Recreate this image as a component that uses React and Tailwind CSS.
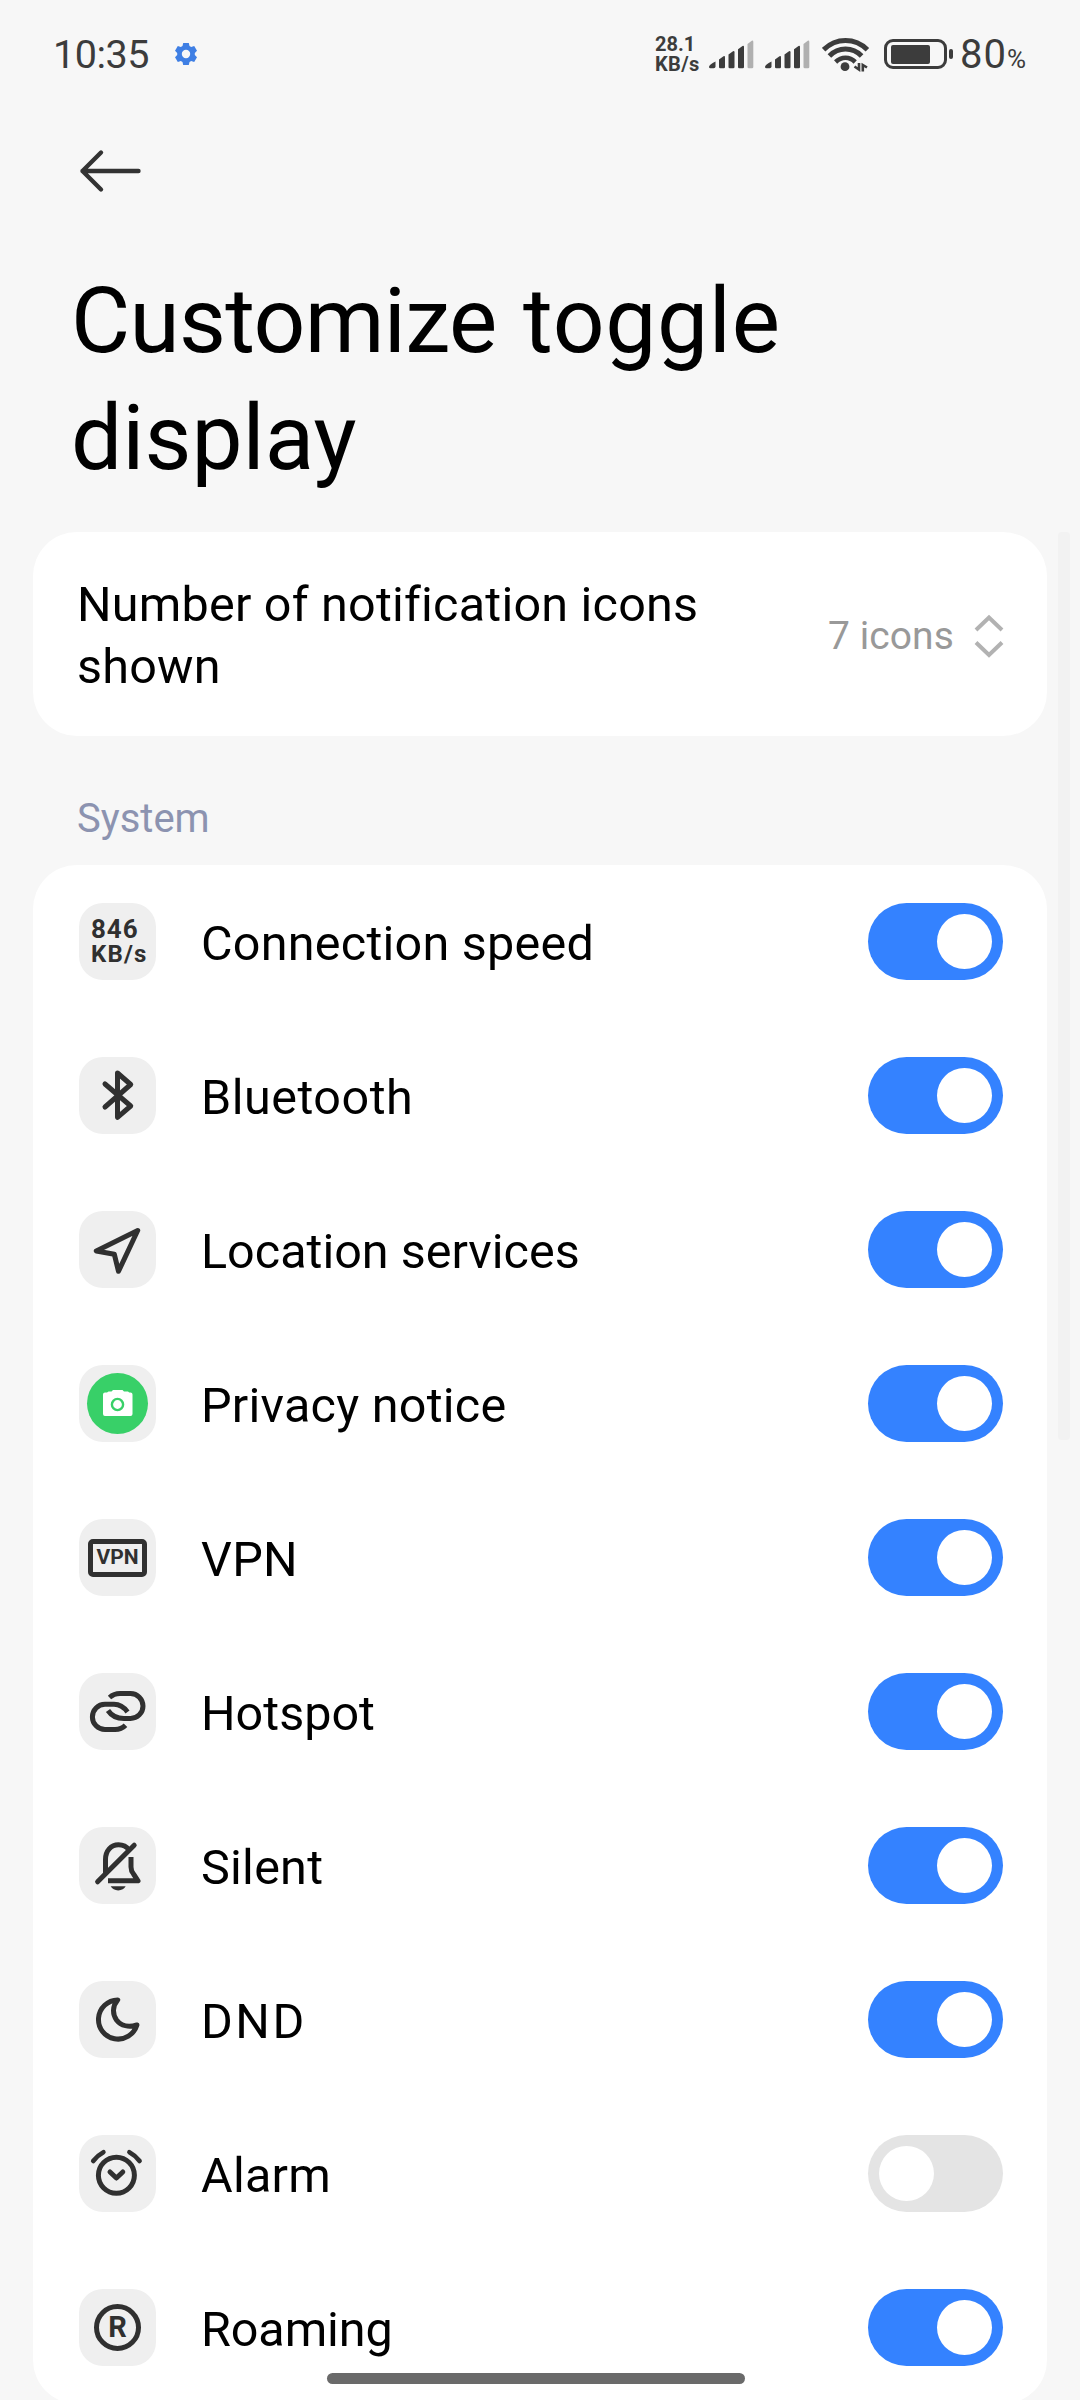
import { useState } from 'react';

function Stroke({ children, width = 5, cap = 'round' }) {
    return (
        <svg viewBox="0 0 77 77" className="w-[77px] h-[77px]" fill="none" stroke="#303030" strokeWidth={width} strokeLinecap={cap} strokeLinejoin="round">
            {children}
        </svg>
    );
}

function SpeedIcon() {
    return (
        <div className="w-full pl-3 text-[#303030] font-bold">
            <div className="text-[26px] leading-[25px] tracking-[0.9px]">846</div>
            <div className="text-[24px] leading-[25px] tracking-[1.2px]">KB/s</div>
        </div>
    );
}

function BluetoothIcon() {
    return (
        <Stroke>
            <path d="M26 27 L51.7 49 L38.5 60.3 V16 L51.7 27.5 L26 50" />
        </Stroke>
    );
}

function LocationIcon() {
    return (
        <Stroke>
            <path d="M58.7 19.5 L17.3 40 L35.3 43.2 L39.5 60.3 Z" />
        </Stroke>
    );
}

function CameraIcon() {
    return (
        <svg viewBox="0 0 77 77" className="w-[77px] h-[77px]">
            <circle cx="38.5" cy="38.5" r="30.5" fill="#38d068" />
            <path d="M26 27.5 h2 l1.5 -1 h3 l1.5 -1.5 h9.5 l1.5 1.5 h4 l1.2 1 h1.3 a2 2 0 0 1 2 2 v19.5 a2 2 0 0 1 -2 2 h-25.5 a2 2 0 0 1 -2 -2 v-19.5 a2 2 0 0 1 2 -2 z" fill="#fff" />
            <circle cx="38.5" cy="39.5" r="5.6" fill="none" stroke="#38d068" strokeWidth="2.4" />
        </svg>
    );
}

function VpnIcon() {
    return (
        <div className="w-[59px] h-[38px] border-[5px] border-[#303030] rounded-[5px] flex items-center justify-center text-[#303030] text-[21px] leading-none font-bold">
            VPN
        </div>
    );
}

function HotspotIcon() {
    return (
        <Stroke cap="butt">
            <path d="M30.5 24.5 Q35 20.5 41 20.5 H51.5 A12.5 12.5 0 0 1 51.5 45.5 H45 C37.5 45.5 33 43.5 29 37.5" />
            <path d="M48.5 39 C44.5 33.5 40.5 31.3 35 31.3 H26 A12.6 12.6 0 0 0 26 56.5 H36 Q42.5 56.5 46.5 52.3" />
        </Stroke>
    );
}

function SilentIcon() {
    return (
        <Stroke>
            <path d="M18.6 54.8 L55.2 18.2" />
            <path strokeLinecap="butt" d="M26.5 46 V32.5 C26.5 24 32 17.8 39.5 17.8 C44 17.8 47.5 19.5 50 23" />
            <path strokeLinecap="butt" d="M52 30 V40 Q52 44 54.5 47 L59 53.8 H29" />
            <path d="M31.7 59.3 H46.7 Q44.5 63.4 39.2 63.4 Q34 63.4 31.7 59.3 Z" fill="#303030" stroke="none" />
        </Stroke>
    );
}

function MoonIcon() {
    return (
        <Stroke>
            <path d="M38.7 18.9 A19.6 19.6 0 1 0 57.9 44 C50 46.5 42 45 37.5 39 C33.2 32.8 33.5 25 38.7 18.9 Z" />
        </Stroke>
    );
}

function AlarmIcon() {
    return (
        <Stroke>
            <circle cx="37.4" cy="40.3" r="18" />
            <path d="M31 37 L37.4 43 L43.8 37" />
            <path strokeWidth="4.6" d="M14.2 26 Q18.4 20.4 24.4 17.2 M50.4 17.2 Q56.4 20.4 60.6 26" />
        </Stroke>
    );
}

function RoamingIcon() {
    return (
        <div className="w-[47px] h-[47px] border-[5px] border-[#303030] rounded-full flex items-center justify-center text-[#303030] text-[29px] leading-none font-bold">
            R
        </div>
    );
}

const ITEMS = [
    { label: 'Connection speed', icon: SpeedIcon, on: true },
    { label: 'Bluetooth', icon: BluetoothIcon, on: true, tracking: 'tracking-[0.5px]' },
    { label: 'Location services', icon: LocationIcon, on: true, tracking: 'tracking-normal' },
    { label: 'Privacy notice', icon: CameraIcon, on: true },
    { label: 'VPN', icon: VpnIcon, on: true },
    { label: 'Hotspot', icon: HotspotIcon, on: true, tracking: 'tracking-normal' },
    { label: 'Silent', icon: SilentIcon, on: true },
    { label: 'DND', icon: MoonIcon, on: true, tracking: 'tracking-[2.5px]' },
    { label: 'Alarm', icon: AlarmIcon, on: false },
    { label: 'Roaming', icon: RoamingIcon, on: true, tracking: 'tracking-[-0.1px]' },
];

function Toggle({ on, onClick }) {
    return (
        <button onClick={onClick} className={`w-[135px] h-[77px] rounded-full p-[11px] flex shrink-0 ${on ? 'bg-[#3482ff] justify-end' : 'bg-[#e4e4e4] justify-start'}`}>
            <span className="w-[55px] h-[55px] rounded-full bg-white" />
        </button>
    );
}

function Signal() {
    return (
        <svg viewBox="0 0 45 29" className="w-[45px] h-[29px]" fill="#3c3c3c">
            <path d="M0 27 q0 -2.5 6.5 -5.5 V26.5 q0 1.8 -1.8 1.8 H1.5 q-1.5 0 -1.5 -1.3 z" />
            <path d="M10 19.5 l4.5 -3.3 q1.5 -.6 1.5 1 V27 q0 1.3 -1.3 1.3 H11.3 q-1.3 0 -1.3 -1.3 z" />
            <path d="M19.5 14.5 l4.5 -3.3 q1.5 -.6 1.5 1 V27 q0 1.3 -1.3 1.3 H20.8 q-1.3 0 -1.3 -1.3 z" />
            <path d="M29 9.3 l4.5 -3.3 q1.5 -.6 1.5 1 V27 q0 1.3 -1.3 1.3 H30.3 q-1.3 0 -1.3 -1.3 z" />
            <path fill="#b0b0b0" d="M38.5 4 l4.3 -3.3 q1.5 -.6 1.5 1 V27 q0 1.3 -1.3 1.3 H39.8 q-1.3 0 -1.3 -1.3 z" />
        </svg>
    );
}

function StatusBar() {
    return (
        <div className="h-[108px] pl-[53px] pr-[54px] flex items-center text-[#3c3c3c]">
            <span className="text-[39.5px] leading-none tracking-[-0.5px] w-[121px] pt-[2px]">10:35</span>
            <svg viewBox="0 0 24 24" className="w-6 h-6 mr-auto">
                <path fill="#3f7fe4" fillRule="evenodd" d="M9.2 1 H14.8 L15.5 4 L17.2 4.9 L20.2 4 L23 8.8 L20.8 11 V13 L23 15.2 L20.2 20 L17.2 19.1 L15.5 20 L14.8 23 H9.2 L8.5 20 L6.8 19.1 L3.8 20 L1 15.2 L3.2 13 V11 L1 8.8 L3.8 4 L6.8 4.9 L8.5 4 Z M12 7.8 A4.2 4.2 0 1 0 12 16.2 A4.2 4.2 0 1 0 12 7.8 Z" />
            </svg>
            <div className="font-bold text-[20px] leading-[20px] w-[54px]">
                <div>28.1</div>
                <div className="tracking-[0.4px]">KB/s</div>
            </div>
            <Signal />
            <div className="w-[11px]" />
            <Signal />
            <svg viewBox="0 0 48 36" className="w-12 h-9 ml-3" fill="none" stroke="#3c3c3c" strokeWidth="5">
                <path d="M1.6 13.7 Q11 4.5 23.5 4.5 Q36 4.5 45.4 13.7" />
                <path d="M7.4 20 Q14.2 13.1 23.5 13.1 Q32.8 13.1 39.6 20" />
                <path strokeWidth="4.6" d="M13.6 26 Q18 21.8 23.5 21.8 Q29 21.8 33.2 26" />
                <circle cx="23" cy="30.7" r="4.4" fill="#3c3c3c" stroke="none" />
                <path strokeWidth="2.6" d="M37 27 V33.5 L32.5 30.5 M40.8 35.5 V29 L45 31.5" />
            </svg>
            <div className="ml-[14px] w-[63px] h-[30px] border-[3px] border-[#3c3c3c] rounded-[9px] flex items-center pl-1">
                <div className="w-[39px] h-[19px] bg-[#3c3c3c] rounded-[2px]" />
            </div>
            <div className="w-1 h-[10px] bg-[#3c3c3c] rounded-[2px] ml-[2px]" />
            <div className="ml-[7px] pt-[2px] flex items-baseline">
                <span className="text-[40px] leading-none tracking-[1px]">80</span>
                <span className="text-[26px] leading-none">%</span>
            </div>
        </div>
    );
}

export default function App() {
    const [items, setItems] = useState(ITEMS);

    const flip = (label) => {
        setItems(items.map(i => (i.label === label ? { ...i, on: !i.on } : i)));
    };

    return (
        <div className="relative w-[1080px] h-[2400px] overflow-hidden bg-[#f7f7f7] text-black font-[Roboto,sans-serif] [font-variant-ligatures:none]">
            <StatusBar />

            <div className="h-[152px] pl-[78px] pt-[41px]">
                <svg viewBox="0 0 64 44" className="w-16 h-11" fill="none" stroke="#333" strokeWidth="4.4" strokeLinecap="round" strokeLinejoin="round">
                    <path d="M60.5 22 H4.5 M23 3.5 L4.5 22 L23 40.5" />
                </svg>
            </div>

            <h1 className="pl-[71px] pt-[3px] text-[91px] leading-[117px] h-[272px]">
                <span className="tracking-[-0.7px]">Customize</span> <span className="pl-[4px] tracking-[0.7px]">toggle</span><br />display
            </h1>

            <div className="mx-[33px] h-[204px] pl-[44px] pr-[43px] pt-[3px] bg-white rounded-[44px] flex items-center">
                <div className="text-[48.5px] leading-[62px] tracking-[0.22px] pt-[1px] flex-1">Number of notification icons<br />shown</div>
                <div className="text-[39px] text-[#999] pt-[1px] tracking-[0.1px]">7 icons</div>
                <svg viewBox="0 0 30 44" className="w-[30px] h-11 ml-5" fill="none" stroke="#b2b2b2" strokeWidth="4">
                    <path d="M2 16 L15 3.5 L28 16 M2 28.5 L15 41 L28 28.5" />
                </svg>
            </div>

            <div className="h-[129px] pl-[77px] pt-[53px] text-[40px] leading-[60px] text-[#8c93b0]">System</div>

            <div className="mx-[33px] h-[1539px] pt-[38px] px-11 bg-white rounded-[44px] flex flex-col gap-[77px]">
                {items.map(({ label, icon: Icon, on, tracking }) => (
                    <div key={label} className="h-[77px] pl-[2px] flex items-center shrink-0">
                        <div className="w-[77px] h-[77px] rounded-[24px] bg-[#efefef] flex items-center justify-center">
                            <Icon />
                        </div>
                        <span className={`flex-1 pl-[45px] pt-[5px] text-[48.5px] leading-[60px] ${tracking || 'tracking-[0.25px]'}`}>{label}</span>
                        <Toggle on={on} onClick={() => flip(label)} />
                    </div>
                ))}
            </div>

            {/* scrollbar */}
            <div className="absolute left-[1058px] top-[532px] w-3 h-[908px] bg-[#f2f2f2] rounded-sm" />
            {/* home indicator */}
            <div className="absolute left-[327px] top-[2373px] w-[418px] h-[11px] bg-[#6a6a6a] rounded-full" />
        </div>
    );
}
